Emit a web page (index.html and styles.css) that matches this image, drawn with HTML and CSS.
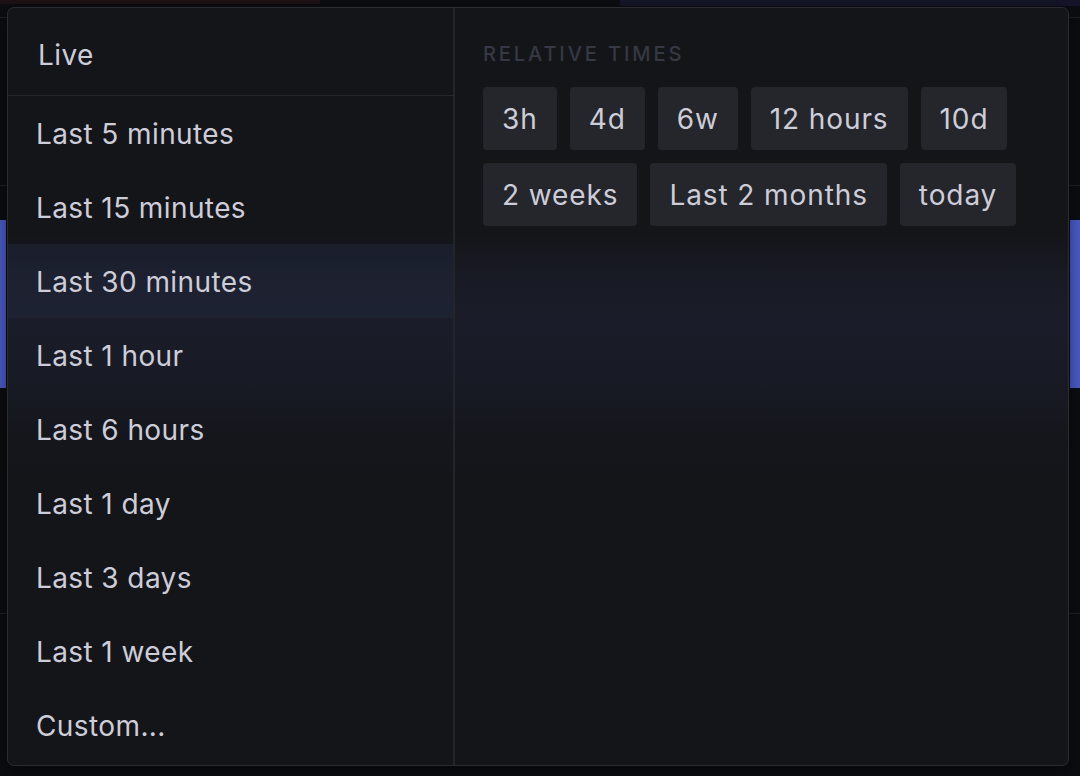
FILE: index.html
```html
<!DOCTYPE html>
<html lang="en">
<head>
<meta charset="utf-8">
<title>Time range picker</title>
<link rel="stylesheet" href="styles.css">
</head>
<body>
<div class="backdrop">
  <div class="bg-top-left"></div>
  <div class="bg-top-right"></div>
  <div class="bg-bar bg-bar-left"></div>
  <div class="bg-bar bg-bar-right"></div>
  <div class="bg-line bg-line-1"></div>
  <div class="bg-line bg-line-2"></div>
  <div class="bg-line bg-line-3"></div>
</div>
<div class="picker">
  <div class="options">
    <div class="live">Live</div>
    <ul class="ranges">
      <li class="range">Last 5 minutes</li>
      <li class="range">Last 15 minutes</li>
      <li class="range selected">Last 30 minutes</li>
      <li class="range">Last 1 hour</li>
      <li class="range">Last 6 hours</li>
      <li class="range">Last 1 day</li>
      <li class="range">Last 3 days</li>
      <li class="range">Last 1 week</li>
      <li class="range">Custom...</li>
    </ul>
  </div>
  <div class="relative">
    <div class="heading">RELATIVE TIMES</div>
    <div class="chips">
      <span class="chip">3h</span>
      <span class="chip">4d</span>
      <span class="chip">6w</span>
      <span class="chip">12 hours</span>
      <span class="chip">10d</span>
      <span class="chip">2 weeks</span>
      <span class="chip">Last 2 months</span>
      <span class="chip">today</span>
    </div>
  </div>
</div>
</body>
</html>
```
FILE: styles.css
```css
* { box-sizing: border-box; }
html, body { margin: 0; padding: 0; }
body {
  width: 1080px;
  height: 776px;
  background: #0c0d11;
  font-family: Inter, "Noto Sans", sans-serif;
  color: #cdcdd9;
  overflow: hidden;
  position: relative;
  padding: 7px 0 0 7px;
}
.backdrop { position: absolute; inset: 0; z-index: 0; }
.bg-top-left { position: absolute; left: 0; top: 0; width: 320px; height: 4px; background: #1d1215; }
.bg-top-right { position: absolute; right: 0; top: 0; width: 460px; height: 6px; background: #15152a; }
.bg-bar { position: absolute; top: 220px; height: 168px; background: #4a5bc8; }
.bg-bar-left { left: 0; width: 6px; }
.bg-bar-right { right: 0; width: 10px; }
.bg-line { position: absolute; left: 0; right: 0; height: 1px; background: #202127; }
.bg-line-1 { top: 17px; }
.bg-line-2 { top: 185px; }
.bg-line-3 { top: 613px; }

.picker {
  position: relative;
  z-index: 1;
  width: 1062px;
  height: 759px;
  display: flex;
  background: linear-gradient(180deg, #141519 0px, #141519 225px, #181a24 265px, #1a1d29 310px, #181b25 370px, #15161c 430px, #141519 480px, #141519 100%);
  border: 1px solid #2b2c31;
  border-radius: 7px;
  overflow: hidden;
  box-shadow: 0 4px 16px rgba(0,0,0,0.5);
}
.options {
  width: 447px;
  flex: none;
  border-right: 2px solid #24252a;
  display: flex;
  flex-direction: column;
}
.live {
  height: 88px;
  border-bottom: 1px solid #26272c;
  padding-left: 30px;
  padding-top: 6px;
  display: flex;
  align-items: center;
  font-size: 28px;
  letter-spacing: 0.4px;
}
.ranges { list-style: none; margin: 0; padding: 0; }
.range {
  height: 74px;
  padding-left: 28px;
  padding-top: 2px;
  display: flex;
  align-items: center;
  font-size: 28px;
  letter-spacing: 0.4px;
}
.range.selected { background: rgba(36, 42, 66, 0.4); }

.relative {
  flex: 1;
  padding: 32px 24px 0 28px;
}
.heading {
  font-size: 20px;
  letter-spacing: 2.9px;
  color: #363843;
  font-weight: 500;
  height: 47px;
  line-height: 28px;
}
.chips {
  display: flex;
  flex-wrap: wrap;
  gap: 13px 13px;
  width: 560px;
}
.chip {
  height: 63px;
  padding: 0 19px;
  background: #25262b;
  border-radius: 4px;
  display: flex;
  align-items: center;
  font-size: 28px;
  letter-spacing: 0.9px;
  color: #cdcdd9;
}
```
